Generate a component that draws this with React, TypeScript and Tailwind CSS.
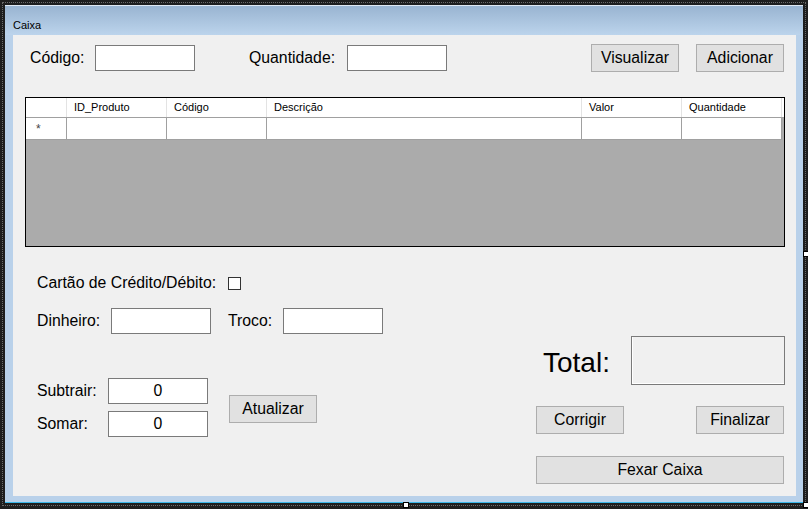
import React from 'react';

const font = "font-['Liberation_Sans',Arial,sans-serif]";

const columns = [
  { label: 'ID_Produto', w: 'w-[100px]' },
  { label: 'Código', w: 'w-[100px]' },
  { label: 'Descrição', w: 'w-[315px]' },
  { label: 'Valor', w: 'w-[100px]' },
  { label: 'Quantidade', w: 'w-[100px]' },
];

const TextBox: React.FC<{ w: string; value?: string }> = ({ w, value }) => (
  <div className={`${w} h-[26px] bg-white border border-[#7a7a7a] flex items-center justify-center text-[15.8px] text-black`}>
    {value}
  </div>
);

const Button: React.FC<{ w: string; children: React.ReactNode }> = ({ w, children }) => (
  <button className={`${w} h-[28px] bg-[#e1e1e1] border border-[#adadad] text-[15.8px] text-black flex items-center justify-center`}>
    {children}
  </button>
);

export default function App() {
  return (
    <div className={`relative w-[808px] h-[509px] bg-[#1e1e1e] overflow-hidden ${font}`}>
      {/* designer selection frame */}
      <div className="absolute left-[2px] top-[2px] w-[804px] h-[504px] border border-dotted border-[#6a6a6a] pointer-events-none" />

      <div className="absolute left-[5px] top-[5px] w-[798px] h-[498px] flex flex-col bg-[#b9d1ea] border-b border-[#38b6e8]">
        {/* title bar */}
        <div className="h-[30px] flex items-end pb-[4px] pl-[8px] bg-gradient-to-b from-[#99b4d1] to-[#bcd4ec] border-t border-[#dfe8f2]">
          <span className="text-[11px] text-black leading-none">Caixa</span>
        </div>

        {/* client area */}
        <div className="flex-1 ml-[8px] mr-[7px] mb-[6px] bg-[#f0f0f0] flex flex-col">
          {/* top row */}
          <div className="flex items-center h-[28px] mt-[9px] pr-[12px]">
            <span className="ml-[17px] w-[65px] text-[15.8px] text-black">Código:</span>
            <TextBox w="w-[100px]" />
            <span className="ml-[54px] w-[98px] text-[15.8px] text-black">Quantidade:</span>
            <TextBox w="w-[100px]" />
            <div className="flex-1" />
            <Button w="w-[88px]">Visualizar</Button>
            <div className="w-[17px]" />
            <Button w="w-[88px]">Adicionar</Button>
          </div>

          {/* data grid */}
          <div className="ml-[12px] mt-[25px] w-[760px] h-[150px] border border-black bg-[#ababab] flex flex-col">
            <div className="flex h-[20px] bg-white border-b border-[#a0a0a0]">
              <div className="w-[41px] border-r border-[#e3e3e3]" />
              {columns.map((c) => (
                <div key={c.label} className={`${c.w} border-r border-[#e3e3e3] pl-[7px] flex items-center text-[11px] text-black`}>
                  {c.label}
                </div>
              ))}
            </div>
            <div className="flex h-[22px] bg-white w-[756px] border-b border-[#a0a0a0]">
              <div className="w-[41px] border-r border-[#a0a0a0] pl-[10px] flex items-center text-[12px] text-[#444]">*</div>
              {columns.map((c) => (
                <div key={c.label} className={`${c.w} border-r border-[#a0a0a0]`} />
              ))}
            </div>
          </div>

          {/* lower area */}
          <div className="flex pr-[11px]">
            {/* left column */}
            <div className="flex flex-col ml-[24px]">
              <div className="flex items-center h-[20px] mt-[26px]">
                <span className="w-[191px] text-[15.8px] text-black">Cartão de Crédito/Débito:</span>
                <div className="w-[13px] h-[13px] bg-white border border-[#333]" />
              </div>
              <div className="flex items-center mt-[15px]">
                <span className="w-[74px] text-[15.8px] text-black">Dinheiro:</span>
                <TextBox w="w-[100px]" />
                <span className="ml-[17px] w-[55px] text-[15.8px] text-black">Troco:</span>
                <TextBox w="w-[100px]" />
              </div>
              <div className="flex items-center mt-[44px]">
                <div className="flex flex-col gap-[7px]">
                  <div className="flex items-center">
                    <span className="w-[71px] text-[15.8px] text-black">Subtrair:</span>
                    <TextBox w="w-[100px]" value="0" />
                  </div>
                  <div className="flex items-center">
                    <span className="w-[71px] text-[15.8px] text-black">Somar:</span>
                    <TextBox w="w-[100px]" value="0" />
                  </div>
                </div>
                <div className="ml-[21px] mt-[3px]">
                  <Button w="w-[88px]">Atualizar</Button>
                </div>
              </div>
            </div>

            <div className="flex-1" />

            {/* right column */}
            <div className="w-[249px] flex flex-col mt-[89px]">
              <div className="flex items-center">
                <span className="ml-[7px] w-[88px] text-[28px] text-black mt-[4px]">Total:</span>
                <div className="w-[154px] h-[49px] border border-[#7a7a7a] bg-[#f0f0f0] shadow-[inset_1px_-1px_0_#ffffff]" />
              </div>
              <div className="flex justify-between mt-[21px] w-[248px]">
                <Button w="w-[88px]">Corrigir</Button>
                <Button w="w-[88px]">Finalizar</Button>
              </div>
              <div className="mt-[22px]">
                <Button w="w-[248px]">Fexar Caixa</Button>
              </div>
            </div>
          </div>
        </div>
      </div>

      {/* resize handles */}
      <div className="absolute left-[403px] top-[502px] w-[6px] h-[6px] bg-white border border-black" />
      <div className="absolute left-[803px] top-[502px] w-[6px] h-[6px] bg-white border border-black" />
      <div className="absolute left-[803px] top-[251px] w-[6px] h-[6px] bg-white border border-black" />
    </div>
  );
}
